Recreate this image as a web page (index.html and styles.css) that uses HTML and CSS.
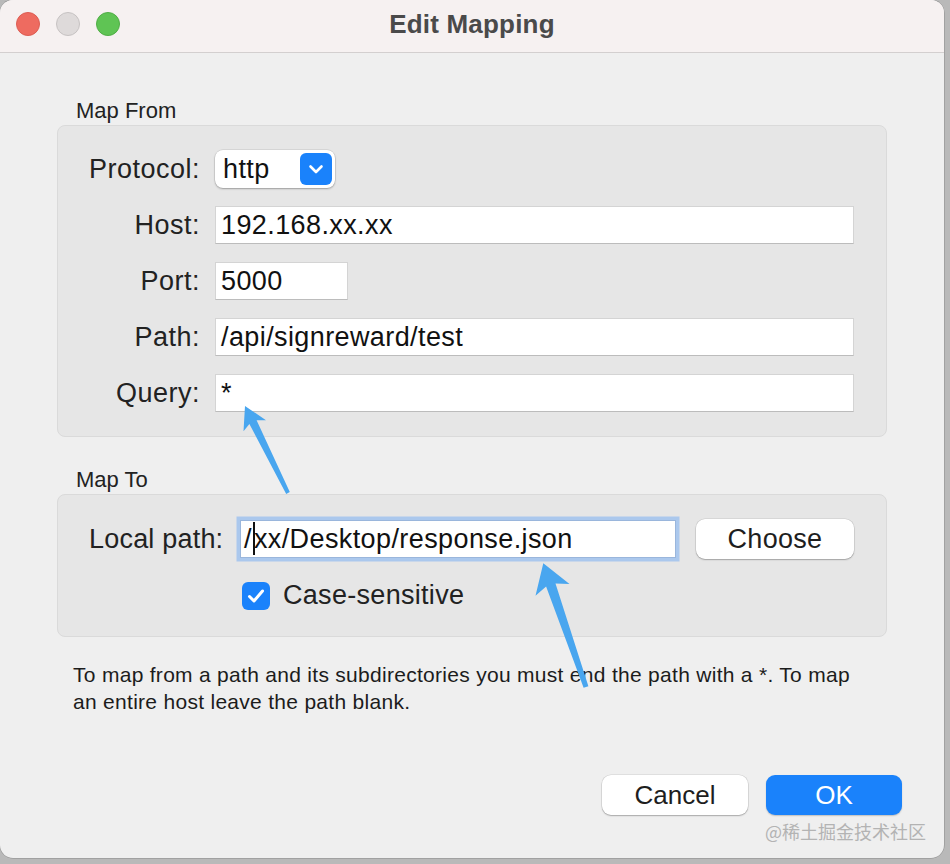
FILE: index.html
```html
<!DOCTYPE html>
<html>
<head>
<meta charset="utf-8">
<title>Edit Mapping</title>
<link rel="stylesheet" href="styles.css">
</head>
<body>
<div class="window">
  <div class="titlebar">
    <div class="lights">
      <span class="light red"></span>
      <span class="light gray"></span>
      <span class="light green"></span>
    </div>
    <div class="title">Edit Mapping</div>
    <div></div>
  </div>
  <div class="content">
    <div class="section-label">Map From</div>
    <div class="group from-group">
      <div class="label">Protocol:</div>
      <div class="select">
        <span class="select-text">http</span>
        <span class="select-btn">
          <svg width="32" height="32" viewBox="0 0 32 32"><path d="M10.5 13.5 L16 19 L21.5 13.5" fill="none" stroke="#fff" stroke-width="2.6" stroke-linecap="round" stroke-linejoin="round"/></svg>
        </span>
      </div>
      <div class="label">Host:</div>
      <div class="field">192.168.xx.xx</div>
      <div class="label">Port:</div>
      <div class="field port">5000</div>
      <div class="label">Path:</div>
      <div class="field">/api/signreward/test</div>
      <div class="label">Query:</div>
      <div class="field">*</div>
    </div>
    <div class="section-label to-label">Map To</div>
    <div class="group to-group">
      <div class="local-row">
        <div class="local-label">Local path:</div>
        <div class="field focus">/<span class="caret"></span>xx/Desktop/response.json</div>
        <button class="btn choose">Choose</button>
      </div>
      <div class="check-row">
        <span class="checkbox">
          <svg width="28" height="28" viewBox="0 0 28 28"><path d="M7.5 14.5 L12 19 L20.5 9" fill="none" stroke="#fff" stroke-width="3" stroke-linecap="round" stroke-linejoin="round"/></svg>
        </span>
        <span class="check-text">Case-sensitive</span>
      </div>
    </div>
    <p class="help">To map from a path and its subdirectories you must end the path with a *. To map<br>an entire host leave the path blank.</p>
    <div class="actions">
      <button class="btn cancel">Cancel</button>
      <button class="btn ok">OK</button>
    </div>
  </div>
  <svg class="arrows" width="944" height="858" viewBox="0 0 944 858">
    <polygon fill="#49a6ef" points="245,406 266,420.2 256.6,420.3 289.8,492.1 286.2,493.9 249.4,423.9 243.5,431.2"/>
    <polygon fill="#49a6ef" points="543.3,563.3 569.5,583.9 555.5,583.4 588.4,686.2 583.6,687.8 546.1,586.6 535.5,595.7"/>
  </svg>
  <div class="watermark">@稀土掘金技术社区</div>
</div>
</body>
</html>
```

FILE: styles.css
```css
html, body {
  margin: 0;
  padding: 0;
}
body {
  width: 950px;
  height: 864px;
  background: #b9b9b9;
  font-family: "Liberation Sans", Arial, sans-serif;
  overflow: hidden;
}
.window {
  position: relative;
  width: 944px;
  height: 858px;
  border-radius: 13px;
  overflow: hidden;
  display: flex;
  flex-direction: column;
  background: #efefef;
  box-shadow: 0 0 0 0.5px rgba(0,0,0,0.25);
}
.titlebar {
  height: 52px;
  flex: none;
  background: #f6f1f1;
  border-bottom: 1px solid #d3cfcf;
  display: grid;
  grid-template-columns: 1fr auto 1fr;
  align-items: center;
}
.lights {
  display: flex;
  gap: 16px;
  padding-left: 16px;
  padding-bottom: 4px;
}
.light {
  width: 24px;
  height: 24px;
  border-radius: 50%;
  box-sizing: border-box;
}
.red { background: #ee6b60; border: 1px solid #dc5d53; }
.gray { background: #dedada; border: 1px solid #c6c2c2; }
.green { background: #5fc454; border: 1px solid #50ad46; }
.title {
  font-size: 26px;
  font-weight: bold;
  color: #4a4a4a;
  padding-bottom: 4px;
  letter-spacing: 0.2px;
}
.content {
  flex: 1;
  display: flex;
  flex-direction: column;
  padding: 45px 57px 43px 57px;
}
.section-label {
  font-size: 22px;
  line-height: 26px;
  color: #222;
  padding-left: 19px;
  margin-bottom: 1px;
}
.to-label {
  margin-top: 30px;
}
.group {
  box-sizing: border-box;
  background: #e6e6e6;
  border: 1px solid #dadada;
  border-radius: 8px;
}
.from-group {
  height: 312px;
  padding: 24px 32px 24px 0;
  display: grid;
  grid-template-columns: 142px 1fr;
  grid-auto-rows: 38px;
  column-gap: 15px;
  row-gap: 18px;
}
.label {
  text-align: right;
  font-size: 27px;
  line-height: 38px;
  color: #222;
  letter-spacing: 0.5px;
}
.field {
  box-sizing: border-box;
  height: 38px;
  background: #fff;
  border: 1px solid #d4d4d4;
  border-bottom-color: #bcbcbc;
  padding-left: 5px;
  font-size: 27px;
  line-height: 36px;
  color: #111;
  white-space: nowrap;
  letter-spacing: 0.4px;
}
.port {
  width: 133px;
}
.select {
  box-sizing: border-box;
  width: 120px;
  height: 38px;
  background: #fff;
  border-radius: 8px;
  box-shadow: 0 1px 2px rgba(0,0,0,0.28), 0 0 0 0.5px rgba(0,0,0,0.12);
  display: flex;
  align-items: center;
  justify-content: space-between;
  padding: 0 3px 0 8px;
}
.select-text {
  font-size: 27px;
  color: #111;
  letter-spacing: 0.4px;
}
.select-btn {
  width: 32px;
  height: 32px;
  border-radius: 6px;
  background: #1a82fb;
  display: block;
}
.select-btn svg { display: block; }
.to-group {
  height: 143px;
  padding: 24px 0 0 31px;
}
.local-row {
  display: flex;
  align-items: center;
  height: 40px;
}
.local-label {
  flex: none;
  width: 151px;
  white-space: nowrap;
  font-size: 27px;
  color: #222;
  letter-spacing: 0.2px;
}
.field.focus {
  flex: none;
  width: 436px;
  border: 1px solid #9ab6dc;
  box-shadow: 0 0 0 3.5px #abc8ed;
  padding-left: 3px;
}
.caret {
  display: inline-block;
  width: 2px;
  height: 33px;
  background: #111;
  vertical-align: -7px;
  margin: 0 -1px 0 1px;
}
.btn {
  box-sizing: border-box;
  height: 40px;
  border: none;
  border-radius: 9px;
  background: #fff;
  font-family: "Liberation Sans", Arial, sans-serif;
  font-size: 26px;
  color: #1e1e1e;
  box-shadow: 0 1px 1.5px rgba(0,0,0,0.25), 0 0 0 0.5px rgba(0,0,0,0.12);
  padding: 0;
}
.choose {
  flex: none;
  width: 158px;
  margin-left: 20px;
  font-size: 27px;
  letter-spacing: 0.3px;
}
.check-row {
  display: flex;
  align-items: center;
  margin-top: 21px;
  margin-left: 153px;
}
.checkbox {
  width: 28px;
  height: 28px;
  border-radius: 6px;
  background: #1a82fb;
  display: block;
}
.checkbox svg { display: block; }
.check-text {
  font-size: 27px;
  color: #222;
  margin-left: 13px;
  letter-spacing: 0.3px;
}
.help {
  margin: 24px 0 0 0;
  padding-left: 16px;
  font-size: 21px;
  line-height: 27px;
  color: #1c1c1c;
  letter-spacing: 0.29px;
  white-space: nowrap;
}
.actions {
  margin-top: auto;
  margin-right: -15px;
  display: flex;
  justify-content: flex-end;
  gap: 18px;
}
.cancel {
  width: 146px;
}
.ok {
  width: 136px;
  background: #1a82fb;
  color: #fff;
  box-shadow: 0 1px 1.5px rgba(0,0,0,0.2);
}
.arrows {
  position: absolute;
  left: 0;
  top: 0;
  pointer-events: none;
}
.watermark {
  position: absolute;
  right: 18px;
  bottom: 16px;
  font-family: "Noto Sans CJK SC", sans-serif;
  font-size: 18px;
  line-height: 22px;
  color: #b3b3b3;
}
```
